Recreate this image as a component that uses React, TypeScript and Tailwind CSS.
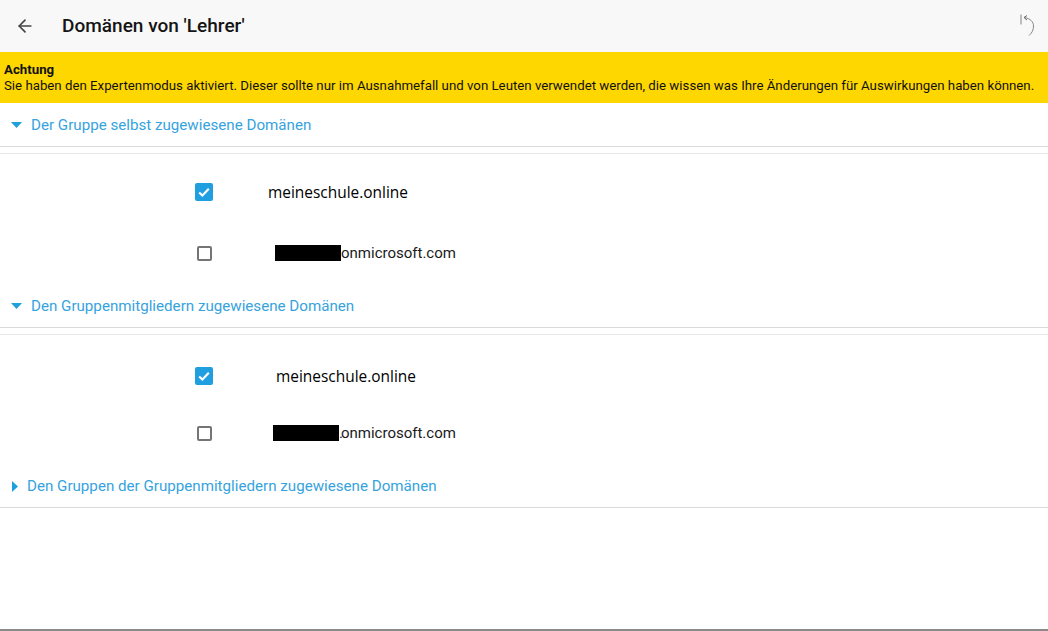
import React from "react";
import { ArrowLeft } from "lucide-react";

function SectionHeader({ title, open = true }: { title: string; open?: boolean }) {
  return (
    <div className="flex h-[44px] items-center border-b border-[#d9d9d9] pt-[1px]">
      {open ? (
        <svg className="ml-[11px] mr-[9px] h-[6px] w-[11px]" viewBox="0 0 11 6">
          <path d="M0 0h11L5.5 6z" fill="#1ea0dc" />
        </svg>
      ) : (
        <svg className="ml-[12px] mr-[9px] h-[11px] w-[6px]" viewBox="0 0 6 11">
          <path d="M0 0l6 5.5L0 11z" fill="#1ea0dc" />
        </svg>
      )}
      <span className="text-[15.15px] text-[#36a3de]">{title}</span>
    </div>
  );
}

function Checkbox({ checked }: { checked: boolean }) {
  if (checked) {
    return (
      <div className="flex h-[18px] w-[18px] items-center justify-center rounded-[2px] bg-[#1f9fe0]">
        <svg className="h-[14px] w-[14px]" viewBox="0 0 14 14" fill="none">
          <path d="M2.200 7.500l3.200 3L11.800 3.800" stroke="#fff" strokeWidth="2.200" />
        </svg>
      </div>
    );
  }
  return <div className="h-[15px] w-[15px] rounded-[2px] border-2 border-[#757575]" />;
}

function DomainRow({
  checked,
  text,
  offset,
  black,
  height,
  segoe,
  dot,
}: {
  checked: boolean;
  text: string;
  offset: string;
  black?: string;
  height: string;
  segoe?: boolean;
  dot?: boolean;
}) {
  return (
    <div className={`flex items-center ${height}`}>
      <div className="flex w-[213px] justify-end">
        <div className="flex w-[18px] justify-center">
          <Checkbox checked={checked} />
        </div>
      </div>
      <div className={`flex items-center ${offset}`}>
        {black && <div className={`h-[16px] bg-black ${black}`} />}
        <span
          className={
            segoe
              ? "pt-[2px] font-['Open_Sans',sans-serif] text-[15.45px] text-black"
              : "text-[15px] text-[#1a1a1a]"
          }
        >
          {dot && <span className="-mr-[2px]">.</span>}
          {text}
        </span>
      </div>
    </div>
  );
}

export default function App() {
  return (
    <div className="flex h-[631px] w-[1048px] flex-col overflow-hidden bg-white font-['Roboto',sans-serif]">
      <header className="flex h-[52px] items-center bg-[#f8f8f8]">
        <ArrowLeft className="ml-[15px] h-[20px] w-[20px] text-[#444]" strokeWidth={2} />
        <h1 className="ml-[27px] text-[19.050px] font-medium leading-[24px] text-[#141414]">Domänen von 'Lehrer'</h1>
        <svg className="ml-auto mr-[11px] h-[26px] w-[18px]" viewBox="0 0 18 26" fill="none">
          <path d="M2 1.500v10" stroke="#aaa" strokeWidth="1.500" />
          <path d="M5.500 4.500c6 1 9 4.500 9 8.500 0 4-1.500 7-4.500 9.500" stroke="#888" strokeWidth="1" />
          <path d="M8 2.500L5 4.500 8 7" stroke="#666" strokeWidth="1" />
        </svg>
      </header>

      <div className="flex h-[51px] flex-col justify-center bg-[#ffd700] pl-[4px] text-[13.250px] leading-[16px] text-[#111]">
        <div className="font-bold">Achtung</div>
        <div>
          Sie haben den Expertenmodus aktiviert. Dieser sollte nur im Ausnahmefall und von Leuten verwendet werden, die wissen was Ihre Änderungen für Auswirkungen haben können.
        </div>
      </div>

      <SectionHeader title="Der Gruppe selbst zugewiesene Domänen" />
      <div className="mt-[6px] border-t border-[#e6e6e6]">
        <DomainRow checked height="h-[76px]" offset="ml-[55px]" text="meineschule.online" segoe />
        <DomainRow checked={false} height="h-[46px]" offset="ml-[62px]" black="w-[66px]" text="onmicrosoft.com" />
      </div>

      <div className="mt-[8px]">
        <SectionHeader title="Den Gruppenmitgliedern zugewiesene Domänen" />
      </div>
      <div className="mt-[6px] border-t border-[#e6e6e6]">
        <DomainRow checked height="h-[82px]" offset="ml-[63px]" text="meineschule.online" segoe />
        <DomainRow checked={false} height="h-[32px]" offset="ml-[60px]" black="w-[66px]" text="onmicrosoft.com" dot />
      </div>

      <div className="mt-[15px]">
        <SectionHeader title="Den Gruppen der Gruppenmitgliedern zugewiesene Domänen" open={false} />
      </div>

      <div className="mt-auto h-[2px] bg-[#8a8a8a]" />
    </div>
  );
}
